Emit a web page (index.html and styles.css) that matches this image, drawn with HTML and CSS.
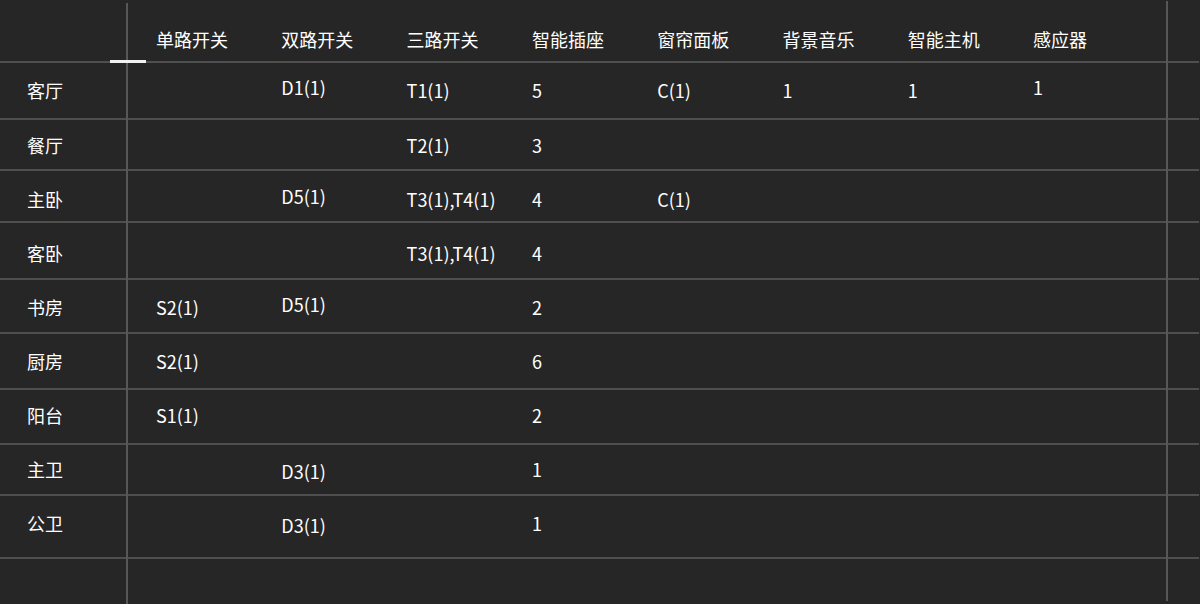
FILE: index.html
```html
<!DOCTYPE html>
<html lang="zh-CN">
<head>
<meta charset="utf-8">
<title>设备清单</title>
<link rel="stylesheet" href="styles.css">
</head>
<body>
<div class="sheet">
  <div class="row head">
    <div class="cell"></div>
    <div class="cell">单路开关</div>
    <div class="cell">双路开关</div>
    <div class="cell">三路开关</div>
    <div class="cell">智能插座</div>
    <div class="cell">窗帘面板</div>
    <div class="cell">背景音乐</div>
    <div class="cell">智能主机</div>
    <div class="cell">感应器</div>
  </div>
  <div class="row r1">
    <div class="cell">客厅</div>
    <div class="cell"></div>
    <div class="cell up">D1(1)</div>
    <div class="cell">T1(1)</div>
    <div class="cell">5</div>
    <div class="cell">C(1)</div>
    <div class="cell">1</div>
    <div class="cell">1</div>
    <div class="cell up">1</div>
  </div>
  <div class="row r2">
    <div class="cell">餐厅</div>
    <div class="cell"></div>
    <div class="cell"></div>
    <div class="cell">T2(1)</div>
    <div class="cell">3</div>
  </div>
  <div class="row r3">
    <div class="cell">主卧</div>
    <div class="cell"></div>
    <div class="cell up">D5(1)</div>
    <div class="cell">T3(1),T4(1)</div>
    <div class="cell">4</div>
    <div class="cell">C(1)</div>
  </div>
  <div class="row r4">
    <div class="cell">客卧</div>
    <div class="cell"></div>
    <div class="cell"></div>
    <div class="cell">T3(1),T4(1)</div>
    <div class="cell">4</div>
  </div>
  <div class="row r5">
    <div class="cell">书房</div>
    <div class="cell">S2(1)</div>
    <div class="cell up">D5(1)</div>
    <div class="cell"></div>
    <div class="cell">2</div>
  </div>
  <div class="row r6">
    <div class="cell">厨房</div>
    <div class="cell">S2(1)</div>
    <div class="cell"></div>
    <div class="cell"></div>
    <div class="cell">6</div>
  </div>
  <div class="row r7">
    <div class="cell">阳台</div>
    <div class="cell">S1(1)</div>
    <div class="cell"></div>
    <div class="cell"></div>
    <div class="cell">2</div>
  </div>
  <div class="row r8">
    <div class="cell">主卫</div>
    <div class="cell"></div>
    <div class="cell dn">D3(1)</div>
    <div class="cell"></div>
    <div class="cell">1</div>
  </div>
  <div class="row r9">
    <div class="cell">公卫</div>
    <div class="cell"></div>
    <div class="cell dn">D3(1)</div>
    <div class="cell"></div>
    <div class="cell">1</div>
  </div>
  <div class="row tail"></div>

  <div class="vline vline-left"></div>
  <div class="vline vline-right"></div>
  <div class="marker"></div>
</div>
</body>
</html>
```

FILE: styles.css
```css
html, body {
  margin: 0;
  padding: 0;
  background: #262626;
}

body {
  width: 1200px;
  height: 604px;
  overflow: hidden;
  font-family: "Noto Sans CJK SC", "Microsoft YaHei", "Liberation Sans", sans-serif;
  font-size: 18px;
  line-height: 24px;
  color: #ffffff;
}

.sheet {
  position: relative;
  width: 1199px;
  height: 604px;
}

.row {
  box-sizing: border-box;
  display: grid;
  grid-template-columns: 128px repeat(7, 125.3px) 1fr;
  align-items: start;
  border-top: 2px solid #4f4f4f;
}

.cell {
  padding-left: 28px;
  white-space: nowrap;
}

.cell:first-child {
  padding-left: 27px;
}

.head { border-top: none; height: 61px; padding-top: 27px; }
.r1 { height: 57px; padding-top: 15px; }
.r2 { height: 51px; padding-top: 13px; }
.r3 { height: 52px; padding-top: 16px; }
.r4 { height: 57px; padding-top: 18px; }
.r5 { height: 54px; padding-top: 15px; }
.r6 { height: 56px; padding-top: 15px; }
.r7 { height: 55px; padding-top: 13px; }
.r8 { height: 51px; padding-top: 12px; }
.r9 { height: 63px; padding-top: 15px; }
.tail { height: 47px; }

.up { margin-top: -3px; }
.dn { margin-top: 2px; }

.vline {
  position: absolute;
  width: 2px;
  background: #575757;
}

.vline-left {
  left: 126px;
  top: 3px;
  bottom: 0;
}

.vline-right {
  left: 1166px;
  top: 1px;
  bottom: 3px;
}

.marker {
  position: absolute;
  left: 110px;
  top: 60px;
  width: 36px;
  height: 3px;
  background: #f2f2f2;
}
```
